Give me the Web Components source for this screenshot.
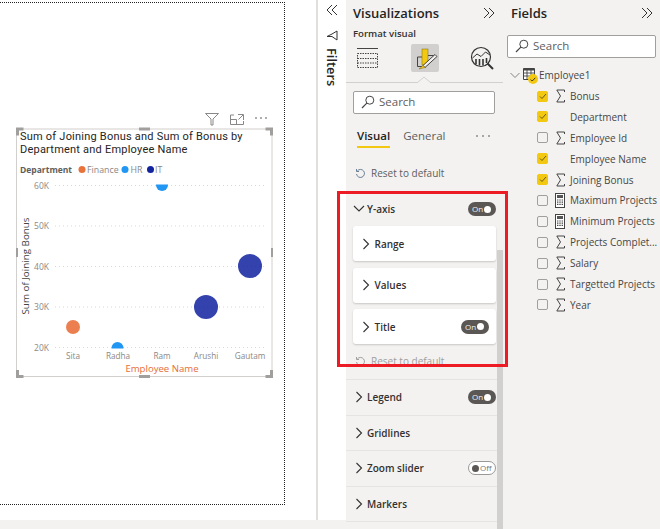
<!DOCTYPE html>
<html>
<head>
<meta charset="utf-8">
<title>Report</title>
<style>
  html, body { margin: 0; padding: 0; height: 100%; overflow: hidden; background: #fff; }
  body { font-family: "Open Sans", "Liberation Sans", sans-serif; }
</style>
</head>
<body>
<bi-report></bi-report>

<script>
const FONT = `"Open Sans", "Liberation Sans", sans-serif`;

const CHEVRON_RIGHT = `<svg width="8" height="12" viewBox="0 0 8 12"><path d="M1.5 1l5 5-5 5" fill="none" stroke="#333" stroke-width="1.1"/></svg>`;
const CHEVRON_DOWN = `<svg width="12" height="8" viewBox="0 0 12 8"><path d="M1 1l5 5 5-5" fill="none" stroke="#333" stroke-width="1.1"/></svg>`;
const DOUBLE = `<svg width="14" height="12" viewBox="0 0 14 12"><path d="M2 1l5 5-5 5M7 1l5 5-5 5" fill="none" stroke="#333" stroke-width="1"/></svg>`;
const LENS = `<svg width="14" height="14" viewBox="0 0 14 14"><circle cx="8.8" cy="5.2" r="4" fill="none" stroke="#444" stroke-width="1"/><path d="M5.8 8.2L1 13" stroke="#444" stroke-width="1.2"/></svg>`;
const SIGMA = `<svg width="9" height="14" viewBox="0 0 9 14"><path d="M8.500 3V1H.8l3.700 6L.8 13h7.700v-2" fill="none" stroke="#444" stroke-width="1"/></svg>`;
const CALC = `<svg width="10" height="15" viewBox="0 0 10 15"><rect x=".5" y=".5" width="9" height="14" fill="#fff" stroke="#444"/><rect x="2" y="2" width="6" height="3" fill="#555"/><path d="M2 7h1.400M4.300 7h1.400M6.600 7H8M2 9.200h1.400M4.300 9.200h1.400M6.600 9.200H8M2 11.400h1.400M4.300 11.400h1.400M6.600 11.400H8" stroke="#444" stroke-width="1.200"/></svg>`;
const RESET = (c) => `<svg width="11" height="11" viewBox="0 0 11 11" fill="none" stroke="${c}"><path d="M2.300 3a4 4 0 1 1-.8 3"/><path d="M1.500 1v2.500H4"/></svg>`;

class BiSwitch extends HTMLElement {
  constructor() {
    super();
    this.attachShadow({ mode: "open" });
    const on = this.getAttribute("state") !== "off";
    this.shadowRoot.innerHTML = `
      <style>
        :host { display: inline-block; line-height: 0; }
        .sw {
          width: 28px; height: 14px; box-sizing: border-box; border-radius: 7px;
          display: flex; align-items: center; gap: 1px; padding: 0 2px 0 4px;
          font: 8px/1 ${FONT};
        }
        .on { background: #5a5755; color: #f3f2f1; }
        .off { background: #fff; border: 1px solid #9a9896; color: #777; flex-direction: row-reverse; padding: 0 2px 0 3px; justify-content: flex-end; }
        i { width: 7px; height: 7px; border-radius: 50%; flex: none; }
        .on i { background: #fff; }
        .off i { background: #5a5755; }
      </style>
      <div class="sw ${on ? "on" : "off"}"><span>${on ? "On" : "Off"}</span><i></i></div>`;
  }
}
customElements.define("bi-switch", BiSwitch);

class BiSearch extends HTMLElement {
  constructor() {
    super();
    this.attachShadow({ mode: "open" });
    this.shadowRoot.innerHTML = `
      <style>
        :host {
          display: flex; align-items: center; gap: 4px; box-sizing: border-box;
          height: 23px; padding: 0 6px 2px 7px; background: #fff;
          border: 1px solid #a19f9d; border-radius: 2px;
          font: 11.5px/1 ${FONT}; color: #605e5c;
        }
      </style>
      ${LENS}<span>Search</span>`;
  }
}
customElements.define("bi-search", BiSearch);

// collapsed / expanded section row of the format pane
class BiSection extends HTMLElement {
  constructor() {
    super();
    this.attachShadow({ mode: "open" });
    const sw = this.getAttribute("switch");
    this.shadowRoot.innerHTML = `
      <style>
        :host {
          display: flex; align-items: center; height: 35.5px; box-sizing: border-box;
          padding: 0 7px 0 9px; border-bottom: 1px solid #e6e4e2;
          font: 600 10px/1 ${FONT}; color: #323130;
        }
        span { margin-left: 4px; flex: 1; }
      </style>
      ${CHEVRON_RIGHT}<span><slot></slot></span>
      ${sw ? `<bi-switch state="${sw}"></bi-switch>` : ""}`;
  }
}
customElements.define("bi-section", BiSection);

class BiCard extends HTMLElement {
  constructor() {
    super();
    this.attachShadow({ mode: "open" });
    const sw = this.getAttribute("switch");
    this.shadowRoot.innerHTML = `
      <style>
        :host {
          display: flex; align-items: center; height: 35px; box-sizing: border-box;
          padding: 0 7px 0 9px; background: #fff; border-radius: 3px;
          box-shadow: 0 1px 2px rgba(0,0,0,.18);
          font: 600 10px/1 ${FONT}; color: #323130;
        }
        span { margin-left: 4.5px; flex: 1; }
      </style>
      ${CHEVRON_RIGHT}<span><slot></slot></span>
      ${sw ? `<bi-switch state="${sw}"></bi-switch>` : ""}`;
  }
}
customElements.define("bi-card", BiCard);

class BiField extends HTMLElement {
  constructor() {
    super();
    this.attachShadow({ mode: "open" });
    const checked = this.hasAttribute("checked");
    const kind = this.getAttribute("kind");
    const icon = kind === "sum" ? SIGMA : kind === "calc" ? CALC : "";
    this.shadowRoot.innerHTML = `
      <style>
        :host {
          display: flex; align-items: center; height: 20.9px; padding-left: 34px;
          font: 10px/1 ${FONT}; color: #484644; white-space: nowrap;
        }
        .box {
          width: 11px; height: 11px; box-sizing: border-box; border-radius: 2px; flex: none;
          border: 1px solid #a19f9d; background: #f3f2f1; display: flex;
          align-items: center; justify-content: center;
        }
        .box.on { background: #f2c811; border-color: #f2c811; }
        .ic { width: 10px; margin: 0 5px 0 7px; flex: none; display: flex; justify-content: center; }
      </style>
      <div class="box ${checked ? "on" : ""}">
        ${checked ? `<svg width="8" height="7" viewBox="0 0 8 7"><path d="M1 3.5l2 2 4-4.5" fill="none" stroke="#6b5a10" stroke-width="1"/></svg>` : ""}
      </div>
      <div class="ic">${icon}</div>
      <slot></slot>`;
  }
}
customElements.define("bi-field", BiField);

class BiFields extends HTMLElement {
  constructor() {
    super();
    this.attachShadow({ mode: "open" });
    this.shadowRoot.innerHTML = `
      <style>
        :host {
          display: block; width: 157px; flex: none; box-sizing: border-box;
          background: #f3f2f1; height: 529px; overflow: hidden;
        }
        header {
          display: flex; justify-content: space-between; align-items: center;
          padding: 3px 6px 0 8px; height: 20px;
          font: 600 13px/1 ${FONT}; color: #252423;
        }
        bi-search { margin: 12px 0 0 4px; width: 149px; }
        .table {
          display: flex; align-items: center; margin: 7px 0 0 7px; height: 20px;
          font: 10px/1 ${FONT}; color: #484644;
        }
        .tbl { position: relative; margin: 0 0 0 3px; width: 16px; height: 14px; }
        .tbl b {
          position: absolute; left: 5px; top: 6px; width: 10px; height: 10px;
          border-radius: 50%; background: #f2c811; display: flex; align-items: center; justify-content: center;
        }
        .list { margin-top: .6px; }
      </style>
      <header><span>Fields</span>${DOUBLE}</header>
      <bi-search></bi-search>
      <div class="table">
        <svg width="10" height="7" viewBox="0 0 10 7"><path d="M.5 1l4.5 4.5L9.500 1" fill="none" stroke="#777" stroke-width=".9"/></svg>
        <div class="tbl">
          <svg width="12" height="12" viewBox="0 0 12 12"><path d="M.5.500h11v11H.5z" fill="#fff" stroke="#444"/><path d="M.5 1.500h11" stroke="#444" stroke-width="2"/><path d="M.5 5h11M.5 8h11M4 2v9.500M8 2v9.500" stroke="#444" stroke-width=".9"/></svg>
          <b><svg width="6" height="5" viewBox="0 0 6 5"><path d="M.7 2.500l1.500 1.500L5.300.8" fill="none" stroke="#222" stroke-width=".9"/></svg></b>
        </div>
        <span>Employee1</span>
      </div>
      <div class="list">
        <bi-field kind="sum" checked>Bonus</bi-field>
        <bi-field checked>Department</bi-field>
        <bi-field kind="sum">Employee Id</bi-field>
        <bi-field checked>Employee Name</bi-field>
        <bi-field kind="sum" checked>Joining Bonus</bi-field>
        <bi-field kind="calc">Maximum Projects</bi-field>
        <bi-field kind="calc">Minimum Projects</bi-field>
        <bi-field kind="sum">Projects Complet...</bi-field>
        <bi-field kind="sum">Salary</bi-field>
        <bi-field kind="sum">Targetted Projects</bi-field>
        <bi-field kind="sum">Year</bi-field>
      </div>`;
  }
}
customElements.define("bi-fields", BiFields);

class BiViz extends HTMLElement {
  constructor() {
    super();
    this.attachShadow({ mode: "open" });
    this.shadowRoot.innerHTML = `
      <style>
        :host {
          display: block; position: relative; width: 157px; flex: none; box-sizing: border-box;
          background: #f3f2f1; height: 529px; overflow: hidden;
          font-family: ${FONT};
        }
        header {
          display: flex; justify-content: space-between; align-items: center;
          padding: 3px 7px 0 7px; height: 20px;
          font: 600 13px/1 ${FONT}; color: #252423;
        }
        .sub { font: 600 9.6px/1 ${FONT}; color: #323130; margin: 6px 0 0 7px; height: 11px; }
        .tabs {
          display: flex; justify-content: space-between; align-items: center;
          padding: 4px 7px 0 7px; height: 32px; box-sizing: border-box;
        }
        .tab { width: 28px; height: 28px; border-radius: 2px; }
        .tab svg { display: block; }
        .tab.sel { background: #d2d0ce; }
        .rule { position: relative; height: 3px; border-top: 1px solid #d2d0ce; margin-top: 10px; }
        .rule svg { position: absolute; left: 71px; top: -7px; }
        bi-search { margin: 5px 8px 0 7px; }
        .sw-tabs {
          display: flex; align-items: flex-start; height: 24px; margin: 16px 0 0 11px;
          font: 11.5px/1 ${FONT}; color: #605e5c;
        }
        .sw-tabs .v { font-weight: 600; color: #252423; padding-bottom: 4px; border-bottom: 2px solid #f2c811; margin-right: 13px; }
        .sw-tabs svg { margin: 5px 13px 0 auto; }
        .reset { display: flex; align-items: center; gap: 5px; font: 10px/1 ${FONT}; color: #605e5c; margin-left: 9px; height: 14px; }
        .reset.top { margin-top: 12px; }
        .group { margin-top: 19px; padding: 0 7px; }
        .ghead {
          display: flex; align-items: center; height: 20px; gap: 2px;
          font: 600 10px/1 ${FONT}; color: #323130;
        }
        .ghead span { flex: 1; }
        .cards { display: grid; gap: 6.5px; margin-top: 7px; }
        .reset.dim { color: #a19f9d; margin: 11.5px 0 0 2px; height: 11px; }
        .list { margin-top: 12.5px; border-top: 1px solid #e6e4e2; }
        .bar { position: absolute; right: 0; top: 250px; bottom: 0; width: 6px; background: #d2d0ce; }
      </style>
      <header><span>Visualizations</span>${DOUBLE}</header>
      <div class="sub">Format visual</div>
      <div class="tabs">
        <div class="tab"><svg width="28" height="28" viewBox="0 0 28 28" fill="none" stroke="#444"><path d="M4 4.500h21"/><rect x="4.500" y="9.500" width="20" height="14" stroke-dasharray="1.500 1"/><path d="M4.500 14.500h20M4.500 19h20" stroke-dasharray="1.500 1"/></svg></div>
        <div class="tab sel"><svg width="28" height="28" viewBox="0 0 28 28"><path d="M6.500 13v9.500H11M6.500 13H11M17 11.500h5.500V15" fill="none" stroke="#444"/><rect x="11" y="5" width="6" height="16" fill="#f2c811" stroke="#7a6a15" stroke-width=".5"/><path d="M24 10.500l2 2L14 23.500l-2-2z" fill="#f3f2f1" stroke="#444"/><path d="M12 21.500l2 2-6 1.500z" fill="#f2c811" stroke="#7a6a15" stroke-width=".5"/></svg></div>
        <div class="tab"><svg width="28" height="28" viewBox="0 0 28 28" fill="none" stroke="#333"><circle cx="13" cy="13" r="9.500" stroke-width="1.200"/><path d="M4.500 14l4.500-4 4 2.500 4.500-4.500 4.500 3"/><path d="M8 15v5M11.500 15v6.500M15 15v6.500M18.500 14v5" stroke-width="1.600"/><path d="M19.500 19.500L25 25" stroke-width="2"/></svg></div>
      </div>
      <div class="rule"><svg width="14" height="7" viewBox="0 0 14 7"><path d="M0 7l7-6 7 6" fill="#f3f2f1" stroke="#d2d0ce"/></svg></div>
      <bi-search></bi-search>
      <div class="sw-tabs"><span class="v">Visual</span><span>General</span><svg width="14" height="2" viewBox="0 0 14 2" fill="#444"><circle cx="1" cy="1" r=".8"/><circle cx="7" cy="1" r=".8"/><circle cx="13" cy="1" r=".8"/></svg></div>
      <div class="reset top">${RESET("#6a7f96")}Reset to default</div>
      <div class="group">
        <div class="ghead">${CHEVRON_DOWN}<span>Y-axis</span><bi-switch></bi-switch></div>
        <div class="cards">
          <bi-card>Range</bi-card>
          <bi-card>Values</bi-card>
          <bi-card switch="on">Title</bi-card>
        </div>
        <div class="reset dim">${RESET("#a19f9d")}Reset to default</div>
      </div>
      <div class="list">
        <bi-section switch="on">Legend</bi-section>
        <bi-section>Gridlines</bi-section>
        <bi-section switch="off">Zoom slider</bi-section>
        <bi-section>Markers</bi-section>
      </div>
      <div class="bar"></div>`;
  }
}
customElements.define("bi-viz", BiViz);

class BiFilters extends HTMLElement {
  constructor() {
    super();
    this.attachShadow({ mode: "open" });
    this.shadowRoot.innerHTML = `
      <style>
        :host {
          display: flex; flex-direction: column; align-items: center; width: 30px; flex: none;
          box-sizing: border-box; background: #fff;
          border-left: 2px solid #e1dfdd;
          padding-top: 4px;
        }
        .f { margin-top: 14px; }
        span {
          writing-mode: vertical-rl; margin-top: 7px;
          font: 600 12.8px/1 ${FONT}; color: #252423;
        }
      </style>
      <svg width="14" height="12" viewBox="0 0 14 12"><path d="M12 1L7 6l5 5M7 1L2 6l5 5" fill="none" stroke="#333" stroke-width="1"/></svg>
      <svg class="f" width="12" height="11" viewBox="0 0 12 11"><path d="M11 1v9L6 6.500H1L6 4z" fill="none" stroke="#333" stroke-width="1"/></svg>
      <span>Filters</span>`;
  }
}
customElements.define("bi-filters", BiFilters);

class BiChart extends HTMLElement {
  constructor() {
    super();
    this.attachShadow({ mode: "open" });
    const grid = [[60, 185.5], [50, 226], [40, 266.5], [30, 307], [20, 347.5]];
    const names = [["Sita", 73], ["Radha", 118], ["Ram", 162], ["Arushi", 206], ["Gautam", 250]];
    this.shadowRoot.innerHTML = `
      <style>
        :host { display: block; position: absolute; left: 0; top: 0; width: 285px; height: 400px; pointer-events: none; }
        text { font-family: ${FONT}; }
        svg { display: block; }
        .title {
          position: absolute; left: 20px; top: 130px; white-space: nowrap;
          font: 400 11px/13px Roboto, ${FONT}; letter-spacing: .22px; color: #252423;
        }
      </style>
      <svg width="285" height="400" viewBox="0 0 285 400">
        <defs><clipPath id="plot"><rect x="50" y="184.500" width="225" height="164"/></clipPath></defs>
        <path d="M205.500 113.500h13l-5.500 5.500v6h-2v-6z" fill="none" stroke="#8a8886" stroke-width="1"/>
        <path d="M234 115h-3.500v9.500h13V121M238 114.500h5.500V120M243 115l-4.500 4.500M230.500 119.500h6v5" fill="none" stroke="#8a8886" stroke-width="1"/>
        <path d="M255 118h2M260 118h2M265 118h2" stroke="#605e5c" stroke-width="1.200"/>
        <rect x="16.500" y="129" width="255.500" height="247.500" fill="#fff" stroke="#d2d0ce"/>
        <g fill="#a19f9d">
          <path d="M16 127.500h7.500v3H19v5h-3zM265.500 127.500h7.500v8h-3v-5h-4.500zM16 378h7.500v-3H19v-5h-3zM273 378h-7.500v-3h4.500v-5h3z"/>
          <rect x="139" y="127.500" width="11" height="3"/><rect x="139" y="375" width="11" height="3"/>
          <rect x="16" y="248" width="2" height="9"/><rect x="271" y="248" width="2" height="9"/>
        </g>
        <text x="20" y="173" font-size="8.500" font-weight="700" fill="#605e5c">Department</text>
        <circle cx="82" cy="169.500" r="3.500" fill="#e8743b"/>
        <text x="87" y="173" font-size="8.800" fill="#8a8886">Finance</text>
        <circle cx="125" cy="169.500" r="3.500" fill="#2196f3"/>
        <text x="130.500" y="173" font-size="8.800" fill="#8a8886">HR</text>
        <circle cx="150.500" cy="169.500" r="3.500" fill="#12239e"/>
        <text x="155" y="173" font-size="8.800" fill="#8a8886">IT</text>
        ${grid.map(([v, y]) => `
          <path d="M55 ${y}H266" stroke="#d9d8d6" stroke-dasharray="1 3"/>
          <text x="49" y="${y + 3}" text-anchor="end" font-size="8.500" fill="#8a8886">${v}K</text>`).join("")}
        <text transform="translate(29 266) rotate(-90)" text-anchor="middle" font-size="9.800" fill="#444">Sum of Joining Bonus</text>
        <g clip-path="url(#plot)">
          <circle cx="162" cy="185" r="6" fill="#2196f3"/>
          <circle cx="117.500" cy="348" r="6" fill="#2196f3"/>
        </g>
        <circle cx="73" cy="327" r="7" fill="#ec7f4f"/>
        <circle cx="206" cy="307" r="12" fill="#12239e" opacity=".86"/>
        <circle cx="250" cy="266" r="12" fill="#12239e" opacity=".86"/>
        ${names.map(([n, x]) => `<text x="${x}" y="359" text-anchor="middle" font-size="8.200" fill="#8a8886">${n}</text>`).join("")}
        <text x="162" y="372" text-anchor="middle" font-size="9.600" fill="#e66c37">Employee Name</text>
      </svg>
      <div class="title">Sum of Joining Bonus and Sum of Bonus by<br>Department and Employee Name</div>`;
  }
}
customElements.define("bi-chart", BiChart);

class BiCanvas extends HTMLElement {
  constructor() {
    super();
    this.attachShadow({ mode: "open" });
    this.shadowRoot.innerHTML = `
      <style>
        :host { display: block; position: relative; width: 316px; flex: none; background: #fff; }
        .page { height: 503px; width: 285px; box-sizing: border-box; border: 1px dotted #222; border-left: none; margin-top: 2px; }
      </style>
      <div class="page"></div>
      <bi-chart></bi-chart>`;
  }
}
customElements.define("bi-canvas", BiCanvas);

class BiReport extends HTMLElement {
  constructor() {
    super();
    this.attachShadow({ mode: "open" });
    this.shadowRoot.innerHTML = `
      <style>
        :host { display: block; position: relative; width: 660px; height: 529px; overflow: hidden; }
        .row { display: flex; }
        .left { display: flex; flex-direction: column; width: 346px; flex: none; height: 529px; }
        .top { display: flex; flex: 1; }
        .foot { height: 9px; background: #f3f2f1; flex: none; }
        .mark {
          position: absolute; left: 337px; top: 191px; width: 171px; height: 176px;
          box-sizing: border-box; border: 3px solid #ed1c24;
        }
      </style>
      <div class="row">
        <div class="left">
          <div class="top"><bi-canvas></bi-canvas><bi-filters></bi-filters></div>
          <div class="foot"></div>
        </div>
        <bi-viz></bi-viz>
        <bi-fields></bi-fields>
      </div>
      <div class="mark"></div>`;
  }
}
customElements.define("bi-report", BiReport);
</script>
</body>
</html>
